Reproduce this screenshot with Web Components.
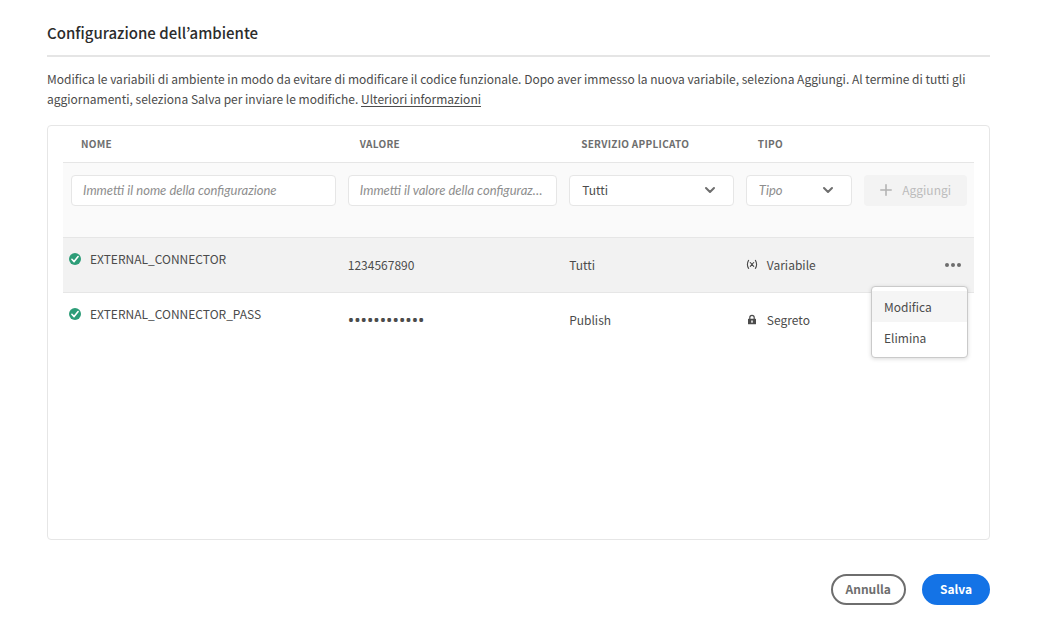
<!DOCTYPE html>
<html lang="it">
<head>
<meta charset="utf-8">
<title>Configurazione dell’ambiente</title>
<style>
  body {
    margin: 0;
    background: #fff;
    color: #4b4b4b;
    font: 12px/20px "Noto Sans CJK KR", "Noto Sans", sans-serif;
  }
  p { margin: 0; }
  a { color: inherit; text-underline-offset: 2px; }
</style>
</head>
<body>
<env-dialog heading="Configurazione dell’ambiente">
  <p slot="intro">Modifica le variabili di ambiente in modo da evitare di modificare il codice funzionale. Dopo aver immesso la nuova variabile, seleziona Aggiungi. Al termine di tutti gli aggiornamenti, seleziona Salva per inviare le modifiche. <a href="#info">Ulteriori informazioni</a></p>
  <env-table></env-table>
  <pill-button slot="actions">Annulla</pill-button>
  <pill-button slot="actions" variant="primary">Salva</pill-button>
</env-dialog>

<script>
const define = (name, html, setup) => {
  const template = document.createElement('template');
  template.innerHTML = html;
  customElements.define(name, class extends HTMLElement {
    constructor() {
      super();
      this.attachShadow({ mode: 'open' }).append(template.content.cloneNode(true));
    }
    connectedCallback() {
      if (setup) setup(this, this.shadowRoot);
    }
  });
};

define('env-dialog', `
  <style>
    :host { display: flex; flex-direction: column; box-sizing: border-box; min-height: 100vh; padding: 20px 61px 17px 47px; }
    h1 { margin: 0; padding-bottom: 10px; border-bottom: 2px solid #e5e5e5; color: #2c2c2c; font-size: 15px; line-height: 25px; font-weight: 500; }
    .intro { margin: 12px 0 16px; }
    main { flex: 1; border: 1px solid #e6e6e6; border-radius: 4px; padding: 0 15px; }
    footer { display: flex; justify-content: flex-end; gap: 16px; margin-top: 34px; }
  </style>
  <h1></h1>
  <div class="intro"><slot name="intro"></slot></div>
  <main><slot></slot></main>
  <footer><slot name="actions"></slot></footer>
`, (host, root) => { root.querySelector('h1').textContent = host.getAttribute('heading'); });

define('pill-button', `
  <style>
    :host { display: block; }
    button { box-sizing: border-box; height: 31px; padding: 0 13px 2px; border: 2px solid #6e6e6e; border-radius: 16px; background: #fff; color: #6e6e6e; font: inherit; font-weight: 700; line-height: 20px; }
    :host([variant="primary"]) button { padding: 0 16px 2px; border-color: #1473e6; background: #1473e6; color: #fff; }
  </style>
  <button type="button"><slot></slot></button>
`);

define('text-field', `
  <style>
    :host { display: block; }
    input { display: block; box-sizing: border-box; width: 100%; height: 31px; padding: 0 11px 2px; border: 1px solid #e6e6e6; border-radius: 4px; background: #fff; color: #4b4b4b; font: inherit; text-overflow: ellipsis; }
    input::placeholder { color: #8e8e8e; opacity: 1; font-family: Lato, sans-serif; font-size: 13px; font-style: italic; }
  </style>
  <input type="text">
`, (host, root) => {
  const input = root.querySelector('input');
  input.placeholder = host.getAttribute('placeholder');
  input.setAttribute('aria-label', host.getAttribute('label'));
});

define('pick-list', `
  <style>
    :host { display: grid; align-items: center; }
    select, svg { grid-area: 1 / 1; }
    select { appearance: none; box-sizing: border-box; width: 100%; height: 31px; padding: 0 36px 2px 12px; border: 1px solid #e6e6e6; border-radius: 4px; background: #fff; color: #4b4b4b; font: inherit; }
    :host([empty]) select { color: #8e8e8e; font-family: Lato, sans-serif; font-size: 13px; font-style: italic; }
    svg { justify-self: end; margin: 0 18px 2px 0; pointer-events: none; }
  </style>
  <select></select>
  <svg width="12" height="8" viewBox="0 0 12 8" fill="none" stroke="#6e6e6e" stroke-width="2" stroke-linecap="round" stroke-linejoin="round" aria-hidden="true"><path d="M2 2l4 4 4-4"/></svg>
`, (host, root) => {
  const select = root.querySelector('select');
  select.setAttribute('aria-label', host.getAttribute('label'));
  select.add(new Option(host.getAttribute('value')));
});

define('add-button', `
  <style>
    :host { display: block; }
    button { display: flex; align-items: center; justify-content: center; gap: 10px; width: 100%; height: 31px; padding: 0 0 2px; border: 0; border-radius: 4px; background: #f3f3f3; color: #bcbcbc; font: inherit; }
  </style>
  <button type="button" disabled>
    <svg width="12" height="12" viewBox="0 0 12 12" stroke="#b3b3b3" stroke-width="1.6" stroke-linecap="round" aria-hidden="true"><path d="M6 .8v10.4M.8 6h10.4"/></svg>
    <slot></slot>
  </button>
`);

define('status-name', `
  <style>
    :host { display: flex; align-items: center; gap: 9px; }
    svg { flex: none; }
  </style>
  <svg width="12" height="12" viewBox="0 0 12 12" aria-hidden="true"><circle cx="6" cy="6" r="6" fill="#2d9d78"/><path d="M2.9 6.3L5.1 8.6 9.1 3.6" fill="none" stroke="#fff" stroke-width="1.6" stroke-linecap="round" stroke-linejoin="round"/></svg>
  <slot></slot>
`);

define('type-tag', `
  <style>
    :host { display: flex; align-items: center; gap: 9px; }
    svg { display: none; flex: none; }
    :host([kind="variable"]) .variable, :host([kind="secret"]) .secret { display: block; }
  </style>
  <svg class="variable" width="12" height="12" viewBox="0 0 12 12" fill="none" stroke="#4b4b4b" stroke-width="1.1" stroke-linecap="round" aria-hidden="true"><path d="M2.6 1.4Q.2 5.400 2.600 9.400M9.400 1.400Q11.800 5.400 9.400 9.400M4.300 3.500L7.700 7.300M7.700 3.500L4.300 7.300"/></svg>
  <svg class="secret" width="12" height="12" viewBox="0 0 12 12" aria-hidden="true"><path d="M3.8 5.4V3.600a2.200 2.200 0 014.400 0v1.800" fill="none" stroke="#4b4b4b" stroke-width="1.2"/><path d="M2.500 4.800h7a.5.5 0 01.5.5v4.400a.5.5 0 01-.5.5h-7a.5.5 0 01-.5-.5V5.300a.5.5 0 01.5-.5zM6 6.300a.9.9 0 00-.5 1.600V9h1V7.900A.9.9 0 006 6.300z" fill="#4b4b4b" fill-rule="evenodd"/></svg>
  <slot></slot>
`);

define('row-menu', `
  <style>
    :host { display: flex; justify-content: flex-end; position: relative; }
    .more { display: flex; align-items: center; height: 20px; padding: 0 6px; border: 0; background: none; }
    ul { position: absolute; z-index: 1; top: 31px; right: -1px; box-sizing: border-box; width: 97px; margin: 0; padding: 4px 0; list-style: none; border: 1px solid #cacaca; border-radius: 4px; background: #fff; box-shadow: 0 1px 4px rgba(0, 0, 0, .15); }
    li button { display: block; width: 100%; height: 31px; padding: 0 12px; border: 0; background: none; color: #4b4b4b; font: inherit; text-align: left; }
    li:first-child button { background: #f5f5f5; }
  </style>
  <button class="more" type="button" aria-label="Altre azioni" aria-expanded="true">
    <svg width="16" height="4" viewBox="0 0 16 4" fill="#6e6e6e" aria-hidden="true"><circle cx="2" cy="2" r="2"/><circle cx="8" cy="2" r="2"/><circle cx="14" cy="2" r="2"/></svg>
  </button>
  <ul>
    <li><button type="button">Modifica</button></li>
    <li><button type="button">Elimina</button></li>
  </ul>
`);

define('env-table', `
  <style>
    :host { display: block; }
    table { width: 100%; table-layout: fixed; border-collapse: separate; border-spacing: 0; }
    .name { width: 30.6%; }
    .value { width: 24.3%; }
    .service { width: 19.4%; }
    .type { width: 13%; }
    th { box-sizing: border-box; height: 36px; padding: 0 18px; color: #6e6e6e; font-size: 10px; line-height: 16px; font-weight: 700; letter-spacing: 0.03em; text-align: left; text-transform: uppercase; }
    td { box-sizing: border-box; height: 54px; padding: 0 6px; }
    .filters td { height: 75px; padding-top: 12px; border-top: 1px solid #e6e6e6; background: #fafafa; vertical-align: top; }
    .selected td { height: 56px; background: #f2f2f2; border-top: 1px solid #e6e6e6; border-bottom: 1px solid #e6e6e6; }
    .filters td:first-child { padding-left: 8px; }
    td:last-child { padding-right: 7px; }
    .entry td:first-child { padding-bottom: 12px; }
    .masked { font-family: "Noto Sans", sans-serif; font-size: 17px; }
  </style>
  <table>
    <thead>
      <tr><th class="name">Nome</th><th class="value">Valore</th><th class="service">Servizio applicato</th><th class="type">Tipo</th><th></th></tr>
    </thead>
    <tbody>
      <tr class="filters">
        <td><text-field label="Nome" placeholder="Immetti il nome della configurazione"></text-field></td>
        <td><text-field label="Valore" placeholder="Immetti il valore della configurazione"></text-field></td>
        <td><pick-list label="Servizio applicato" value="Tutti"></pick-list></td>
        <td><pick-list label="Tipo" value="Tipo" empty></pick-list></td>
        <td><add-button>Aggiungi</add-button></td>
      </tr>
      <tr class="entry selected">
        <td><status-name>EXTERNAL_CONNECTOR</status-name></td>
        <td>1234567890</td>
        <td>Tutti</td>
        <td><type-tag kind="variable">Variabile</type-tag></td>
        <td><row-menu></row-menu></td>
      </tr>
      <tr class="entry">
        <td><status-name>EXTERNAL_CONNECTOR_PASS</status-name></td>
        <td class="masked">••••••••••••</td>
        <td>Publish</td>
        <td><type-tag kind="secret">Segreto</type-tag></td>
        <td></td>
      </tr>
    </tbody>
  </table>
`);
</script>
</body>
</html>
